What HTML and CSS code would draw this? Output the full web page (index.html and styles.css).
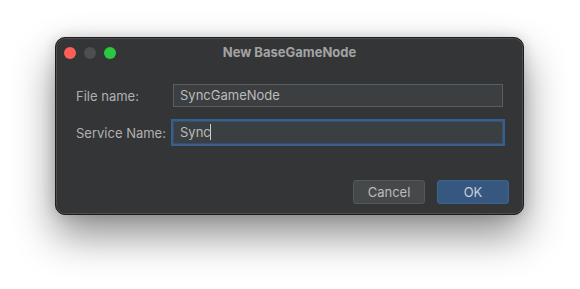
FILE: index.html
```html
<!doctype html>
<html lang="en">
  <head>
    <meta charset="utf-8">
    <title>New BaseGameNode</title>
    <link rel="stylesheet" href="styles.css">
  </head>
  <body>
    <div class="window">
      <div class="titlebar">
        <div class="lights">
          <span class="light red"></span>
          <span class="light grey"></span>
          <span class="light green"></span>
        </div>
        <div class="title">New BaseGameNode</div>
      </div>

      <div class="form">
        <div class="row">
          <span class="label">File name:</span>
          <div class="field">SyncGameNode</div>
        </div>
        <div class="row">
          <span class="label">Service Name:</span>
          <div class="field focused">Sync<span class="caret"></span></div>
        </div>
      </div>

      <div class="buttons">
        <button class="btn">Cancel</button>
        <button class="btn primary">OK</button>
      </div>
    </div>
  </body>
</html>
```

FILE: styles.css
```css
html, body {
  height: 289px;
}
body {
  margin: 0;
  overflow: hidden;
  background-color: #ffffff;
  font-family: Inter, "Liberation Sans", sans-serif;
  font-size: 13px;
  color: #bbbbbb;
}
.window {
  box-sizing: border-box;
  width: 469px;
  height: 178px;
  margin: 37px 0 0 55px;
  background-color: #343537;
  border: 1px solid #1d1d1e;
  border-radius: 10px;
  box-shadow: inset 0 0 0 1px #4c4d4f, 0 20px 42px rgba(0, 0, 0, 0.45), 0 0 14px rgba(0, 0, 0, 0.14);
  display: flex;
  flex-direction: column;
}
.titlebar {
  position: relative;
  height: 29px;
  display: flex;
  align-items: center;
}
.lights {
  display: flex;
  gap: 8px;
  padding-left: 8px;
  padding-top: 1px;
}
.light {
  width: 12px;
  height: 12px;
  border-radius: 50%;
}
.red { background-color: #fe5f57; }
.grey { background-color: #4d4e50; }
.green { background-color: #29c840; }
.title {
  position: absolute;
  left: 0;
  right: 0;
  top: 6px;
  text-align: center;
  font-weight: 700;
  color: #a3a3a3;
}
.form {
  display: flex;
  flex-direction: column;
  gap: 14px;
  padding: 17px 20px 0 20px;
}
.row {
  display: flex;
  align-items: center;
}
.label {
  width: 97px;
  color: #b0b0b0;
}
.field {
  box-sizing: border-box;
  width: 330px;
  height: 23px;
  padding: 0 6px;
  line-height: 21px;
  background-color: #3c3f41;
  border: 1px solid #5b5d5f;
  color: #bbbbbb;
}
.field.focused {
  border-color: #2f4f75;
  box-shadow: 0 0 0 2px #3b5f8b;
}
.caret {
  display: inline-block;
  width: 1px;
  height: 16px;
  margin-left: -1px;
  vertical-align: -3px;
  background-color: #cccccc;
}
.buttons {
  margin-top: auto;
  display: flex;
  justify-content: flex-end;
  gap: 12px;
  padding: 0 14px 10px 0;
}
.btn {
  box-sizing: border-box;
  width: 72px;
  height: 24px;
  font-family: inherit;
  font-size: 13px;
  color: #bbbbbb;
  background-color: #45494b;
  border: 1px solid #55585a;
  border-radius: 3px;
}
.btn.primary {
  background-color: #365880;
  border-color: #3d6591;
  color: #c8ced6;
}
```
